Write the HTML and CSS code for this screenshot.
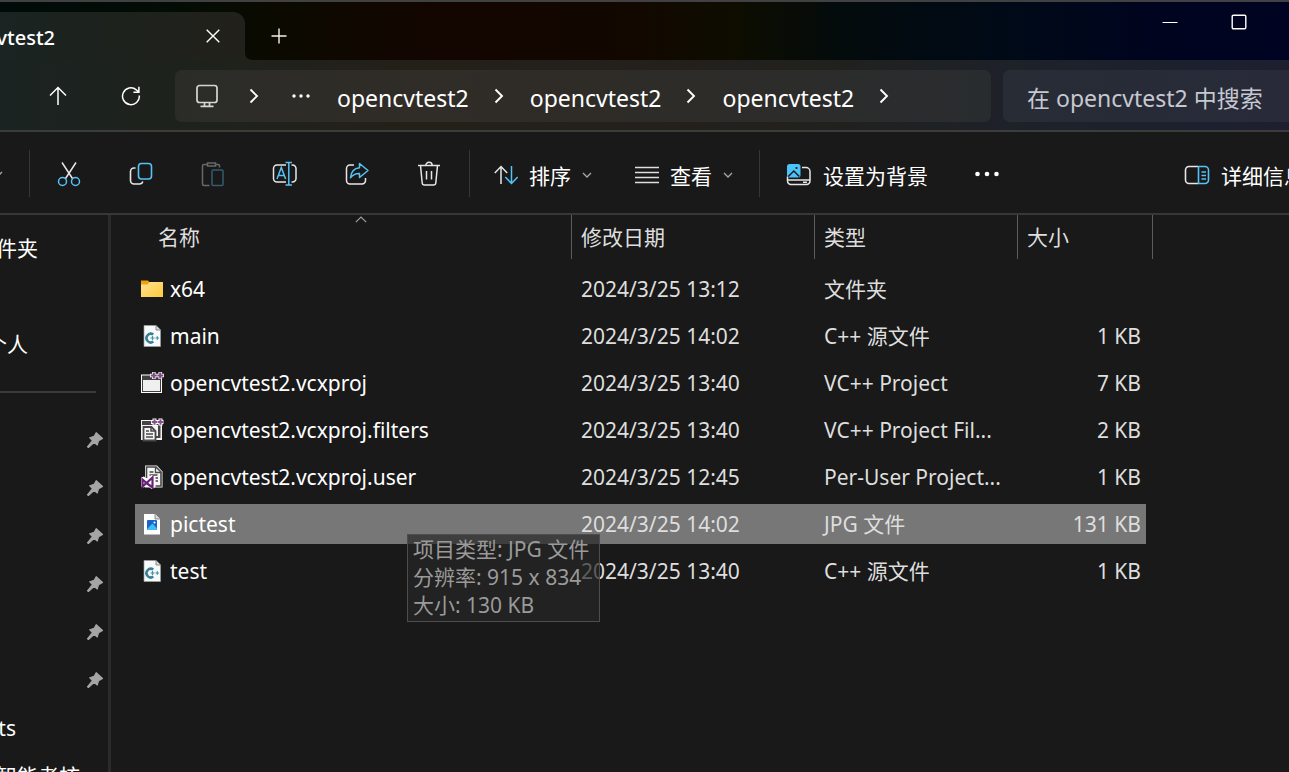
FILE: index.html
```html
<!DOCTYPE html>
<html lang="zh-CN">
<head>
<meta charset="utf-8">
<title>opencvtest2</title>
<link rel="stylesheet" href="styles.css">
</head>
<body>
<svg class="defs" aria-hidden="true">
  <symbol id="chev" viewBox="0 0 10 16"><path d="M1.5 1.5 8 8l-6.500 6.500" fill="none" stroke="currentColor" stroke-width="1.900"/></symbol>
  <symbol id="down" viewBox="0 0 10 6"><path d="M1 1l4 4 4-4" fill="none" stroke="#a8a8a8" stroke-width="1.300"/></symbol>
  <symbol id="pin" viewBox="0 0 16 16"><path d="M9.200.7 15.500 6.500 11.500 8.800 10.200 13 7.200 10.300 1.400 15.500.5 14.800 5.500 8.600 2.800 5.800 7.200 4.300z" fill="#a3a5a6" stroke="#a3a5a6" stroke-width="1.200" stroke-linejoin="round"/></symbol>
  <symbol id="cpp" viewBox="0 0 24 24"><path d="M4 1.500h12l4.500 4.500v16.500H4z" fill="#f7f9fa" stroke="#9aa0a3" stroke-width=".7"/><path d="M16 1.500V6h4.500" fill="#d5dadd" stroke="#777" stroke-width=".8"/><path d="M13.300 10.600a4.300 4.300 0 1 0 0 7" fill="none" stroke="#377f97" stroke-width="2.500"/><path d="M10.500 14h4m-2-2v4m3-2h3.500m-1.700-1.700v3.400" stroke="#4690a8" stroke-width="1.200"/></symbol>
</svg>
<div class="window">
  <header class="titlebar">
    <div class="tab">
      <span class="tab-name">vtest2</span>
      <button class="icon-btn tab-close" aria-label="关闭标签页"><svg width="14" height="14" viewBox="0 0 14 14"><path d="M.7.7l12.600 12.600M13.300.7.7 13.300" stroke="#fff" stroke-width="1.400"/></svg></button>
      <svg class="flare" width="8" height="8" viewBox="0 0 8 8"><path d="M0 0q0 8 8 8H0z" fill="#22211b"/></svg>
    </div>
    <button class="icon-btn new-tab" aria-label="新建标签页"><svg width="16" height="16" viewBox="0 0 16 16"><path d="M8 .5v15M.5 8h15" stroke="#f5f2e6" stroke-width="1.400"/></svg></button>
    <div class="caption">
      <button class="icon-btn caption-btn" aria-label="最小化"><svg width="16" height="16" viewBox="0 0 16 16"><path d="M.5 8.500h15" stroke="#fff"/></svg></button>
      <button class="icon-btn caption-btn" aria-label="最大化"><svg width="16" height="16" viewBox="0 0 16 16"><rect x="1.200" y="1.200" width="13.600" height="13.600" rx="1.200" fill="none" stroke="#fff" stroke-width="1.400"/></svg></button>
    </div>
  </header>

  <div class="navbar">
    <button class="icon-btn nav-btn" aria-label="向上"><svg width="20" height="20" viewBox="0 0 20 20"><path d="M10 19V1.500M2 9.500l8-8 8 8" fill="none" stroke="#fff" stroke-width="1.500"/></svg></button>
    <button class="icon-btn nav-btn" aria-label="刷新"><svg width="20" height="20" viewBox="0 0 20 20"><path d="M18.300 9.500a8.400 8.400 0 1 1-3-5.700l2 1.900M17.900.8v5.400h-5.500" fill="none" stroke="#fff" stroke-width="1.500"/></svg></button>
    <nav class="address" aria-label="地址栏">
      <svg width="24" height="24" viewBox="0 0 24 24"><path d="M4.500 1.500h15a2.500 2.500 0 0 1 2.500 2.500v12a2.500 2.500 0 0 1-2.500 2.500h-15A2.500 2.500 0 0 1 2 16V4a2.500 2.500 0 0 1 2.500-2.500zM9.500 18.500v3.500m5-3.500v3.500M5.500 22.300h13" fill="none" stroke="#d8d6d2" stroke-width="1.700"/></svg>
      <svg class="first-chev" width="10" height="16"><use href="#chev"/></svg>
      <button class="icon-btn crumb-more" aria-label="更多路径"><svg width="20" height="6" viewBox="0 0 20 6"><g fill="#fff"><circle cx="3" cy="3" r="1.700"/><circle cx="10" cy="3" r="1.700"/><circle cx="17" cy="3" r="1.700"/></g></svg></button>
      <a class="crumb" href="#">opencvtest2</a><svg class="chev" width="10" height="16"><use href="#chev"/></svg>
      <a class="crumb" href="#">opencvtest2</a><svg class="chev" width="10" height="16"><use href="#chev"/></svg>
      <a class="crumb" href="#">opencvtest2</a><svg class="chev" width="10" height="16"><use href="#chev"/></svg>
    </nav>
    <input class="search" type="text" aria-label="搜索" placeholder="在 opencvtest2 中搜索">
  </div>

  <div class="toolbar" role="toolbar">
    <button class="icon-btn new-menu" aria-label="新建"><svg width="10" height="6"><use href="#down"/></svg></button>
    <span class="divider"></span>
    <div class="tools">
      <button class="icon-btn" aria-label="剪切"><svg width="26" height="26" viewBox="0 0 26 26" fill="none" stroke-width="1.500"><path d="M6 1.500 16.800 18M20 1.500 9.200 18" stroke="#e6e6e6"/><circle cx="6.500" cy="20.500" r="4" stroke="#56c2f5"/><circle cx="19.500" cy="20.500" r="4" stroke="#56c2f5"/></svg></button>
      <button class="icon-btn" aria-label="复制"><svg width="26" height="26" viewBox="0 0 26 26" fill="none" stroke-width="1.600"><path d="M7.500 7H6a3.500 3.500 0 0 0-3.500 3.500v9A3.500 3.500 0 0 0 6 23h5.500a3.500 3.500 0 0 0 3.300-2.500" stroke="#e6e6e6"/><rect x="10.500" y="2.500" width="13" height="15.500" rx="3" stroke="#56c2f5"/></svg></button>
      <button class="icon-btn" aria-label="粘贴" disabled><svg width="26" height="26" viewBox="0 0 26 26" fill="none" stroke-width="1.500"><path d="M7.500 3.500H4A1.500 1.500 0 0 0 2.500 5v18A1.500 1.500 0 0 0 4 24.500h5.500M15.500 3.500H18A1.500 1.500 0 0 1 19.500 5v1.500M7.500 2h8v3h-8z" stroke="#686868"/><rect x="12" y="9" width="11" height="15.500" rx="1" stroke="#315d6d"/></svg></button>
      <button class="icon-btn" aria-label="重命名"><svg width="26" height="26" viewBox="0 0 26 26" fill="none" stroke-width="1.500"><path d="M14 4H5a3.500 3.500 0 0 0-3.500 3.500v10A3.500 3.500 0 0 0 5 21h9M19.500 4h1A3.500 3.500 0 0 1 24 7.500v10a3.500 3.500 0 0 1-3.500 3.500h-1" stroke="#e6e6e6"/><path d="M5 18l4.300-11.500L13.600 18M6.500 14.500h5.600M16.800 1.500v22.500M13.500 1.500h6.500M13.500 24h6.500" stroke="#56c2f5"/></svg></button>
      <button class="icon-btn" aria-label="共享"><svg width="26" height="26" viewBox="0 0 26 26" fill="none" stroke-width="1.500" stroke-linejoin="round"><path d="M10 4H6a3.500 3.500 0 0 0-3.500 3.500v12A3.500 3.500 0 0 0 6 23h12a3.500 3.500 0 0 0 3.500-3.500V17" stroke="#e6e6e6"/><path d="M15.500 2.500 24 9.500l-8.500 7v-4c-4-.2-6.500 1-9 4.200.5-5.700 3.500-9.500 9-10z" stroke="#56c2f5"/></svg></button>
      <button class="icon-btn" aria-label="删除"><svg width="26" height="26" viewBox="0 0 26 26" fill="none" stroke="#e6e6e6" stroke-width="1.500"><path d="M2 4.500h22M9.800 4.500a3.200 3.200 0 0 1 6.400 0M4.500 4.500l1.700 17.500a2.300 2.300 0 0 0 2.300 2h9a2.300 2.300 0 0 0 2.300-2l1.700-17.500M10.500 10v8.500m5-8.500v8.500"/></svg></button>
    </div>
    <span class="divider"></span>
    <button class="text-btn sort"><svg width="24" height="20" viewBox="0 0 24 20" fill="none" stroke-width="1.500"><path d="M7 19V2M.8 8 7 1.500 13.200 8" stroke="#e6e6e6"/><path d="M17.500 1v17M11.300 12l6.200 6.500 6.200-6.500" stroke="#56c2f5"/></svg><span class="label">排序</span><svg width="10" height="6"><use href="#down"/></svg></button>
    <button class="text-btn view"><svg width="24" height="20" viewBox="0 0 24 20"><path d="M0 2.500h24M0 7.500h24M0 12.500h24M0 17.500h24" stroke="#dedede" stroke-width="1.400"/></svg><span class="label">查看</span><svg width="10" height="6"><use href="#down"/></svg></button>
    <span class="divider"></span>
    <button class="text-btn wallpaper"><svg width="26" height="24" viewBox="0 0 26 24"><path d="M16 4.500h4a4 4 0 0 1 4 4V17M1.500 13.500V18a3.500 3.500 0 0 0 3.500 3.500h15.500A3.500 3.500 0 0 0 24 18v-1H1.500M17 19.300h4" fill="none" stroke="#e6e6e6" stroke-width="1.500"/><rect x="1" y="1" width="13.500" height="13.500" rx="2.500" fill="#4cc2f8"/><path d="M2.300 13.500 7.800 8l5.500 5.500" fill="none" stroke="#1a1a1a" stroke-width="1.500"/><circle cx="10.500" cy="5" r="1.100" fill="#1a1a1a"/></svg><span class="label">设置为背景</span></button>
    <button class="icon-btn more" aria-label="更多"><svg width="26" height="6" viewBox="0 0 26 6"><g fill="#fff"><circle cx="3.500" cy="3" r="2.300"/><circle cx="13" cy="3" r="2.300"/><circle cx="22.500" cy="3" r="2.300"/></g></svg></button>
    <button class="text-btn details"><svg width="26" height="20" viewBox="0 0 26 20" fill="none" stroke-width="1.600"><path d="M14 1.500H5A3.500 3.500 0 0 0 1.500 5v10A3.500 3.500 0 0 0 5 18.500h9" stroke="#e6e6e6"/><path d="M14.500 1.500H21A3.500 3.500 0 0 1 24.500 5v10a3.500 3.500 0 0 1-3.500 3.500h-6.500zM17.500 7h4.500M17.500 10.500h4.500M17.500 14h4.500" stroke="#56c2f5"/></svg><span class="label">详细信息</span></button>
  </div>

  <div class="body">
    <aside class="sidebar">
      <div class="side-row"><span class="side-name w-a">件夹</span></div>
      <div class="side-row"></div>
      <div class="side-row"><span class="side-name w-b">个人</span></div>
      <div class="side-row"><hr></div>
      <div class="side-row"><svg class="pin" width="16" height="16"><use href="#pin"/></svg></div>
      <div class="side-row"><svg class="pin" width="16" height="16"><use href="#pin"/></svg></div>
      <div class="side-row"><svg class="pin" width="16" height="16"><use href="#pin"/></svg></div>
      <div class="side-row"><svg class="pin" width="16" height="16"><use href="#pin"/></svg></div>
      <div class="side-row"><svg class="pin" width="16" height="16"><use href="#pin"/></svg></div>
      <div class="side-row"><svg class="pin" width="16" height="16"><use href="#pin"/></svg></div>
      <div class="side-row"><span class="side-name w-c">ts</span></div>
      <div class="side-row"><span class="side-name w-d">智能考核</span></div>
    </aside>
    <main class="content">
      <table class="files">
        <colgroup><col class="c-name"><col class="c-date"><col class="c-type"><col class="c-size"><col class="c-end"></colgroup>
        <thead>
          <tr>
            <th scope="col"><div class="head head-name">名称<svg class="sorted" width="12" height="7" viewBox="0 0 12 7"><path d="M.8 6.200 6 1l5.200 5.200" fill="none" stroke="#a0a0a0" stroke-width="1.200"/></svg></div></th>
            <th scope="col"><div class="head">修改日期</div></th>
            <th scope="col"><div class="head">类型</div></th>
            <th scope="col" colspan="2"><div class="head head-last">大小</div></th>
          </tr>
        </thead>
        <tbody>
          <tr><td><div class="file"><svg width="24" height="24" viewBox="0 0 24 24"><defs><linearGradient id="fold" x2="1" y2="1"><stop stop-color="#ffe394"/><stop offset="1" stop-color="#ffc83d"/></linearGradient></defs><path d="M1 3.500h7l2 2.500v4H1z" fill="#f0a30a"/><path d="M1 7.500h6.500L9.500 5H23v15H1z" fill="url(#fold)"/></svg>x64</div></td><td>2024/3/25 13:12</td><td>文件夹</td><td></td></tr>
          <tr><td><div class="file"><svg width="24" height="24"><use href="#cpp"/></svg>main</div></td><td>2024/3/25 14:02</td><td>C++ 源文件</td><td>1 KB</td></tr>
          <tr><td><div class="file"><svg width="24" height="24" viewBox="0 0 24 24"><path d="M1 3.500h21v18.500H1z" fill="#fff"/><path d="M2 4.500h19v16.500H2z" fill="#404040"/><path d="M3 9h17v11H3z" fill="#efefef"/><path d="M10 4.500h14M13.800 1v7M20.300 1v7" stroke="#fff" stroke-width="3.600"/><path d="M10.800 4.500h6m-3-3v6m3.500-3h6m-3-3v6" stroke="#814b83" stroke-width="2.200"/></svg>opencvtest2.vcxproj</div></td><td>2024/3/25 13:40</td><td>VC++ Project</td><td>7 KB</td></tr>
          <tr><td><div class="file"><svg width="24" height="24" viewBox="0 0 24 24"><path d="M1 2h21v20H1z" fill="#f5f5f5"/><path d="M2 3h18v4H2zM18 7h2.500v13H16v-2h2z" fill="#454545"/><path d="M3.500 9h8l4 4v9.500h-12z" fill="#f5f5f5" stroke="#484848" stroke-width="1.800"/><path d="M11 9v4h4M6 13h3M6 16h7M6 19h7" fill="none" stroke="#484848" stroke-width="1.500"/><path d="M11 4h12.500M14.500.5v7M20.500.5v7" stroke="#fff" stroke-width="4"/><path d="M11.800 4h5.400m-2.700-2.700v5.400M17.800 4h5.400m-2.700-2.700v5.400" stroke="#88518b" stroke-width="2"/></svg>opencvtest2.vcxproj.filters</div></td><td>2024/3/25 13:40</td><td>VC++ Project Fil...</td><td>2 KB</td></tr>
          <tr><td><div class="file"><svg width="24" height="24" viewBox="0 0 24 24"><path d="M5 .5h12l5.500 6V22.500H5z" fill="#f5f5f5"/><path d="M6.500 13V2h9.500l5 5v14h-7" fill="none" stroke="#484848" stroke-width="1.600"/><path d="M15.500 2v5.500H21M9.500 7h4M9.500 10h8M12 13h6M14.500 16H18" fill="none" stroke="#484848" stroke-width="1.300"/><path d="M1 12.500l3-1 3 2.500 4.500-4 4 2v10l-4 2-4.500-4-3 2.500-3-1z" fill="#fff"/><path d="M2.500 14.500l4 3.500 6-5.500v10l-6-4.500-4 3.500z" fill="none" stroke="#68217a" stroke-width="2.200"/></svg>opencvtest2.vcxproj.user</div></td><td>2024/3/25 12:45</td><td>Per-User Project...</td><td>1 KB</td></tr>
          <tr class="selected"><td><div class="file"><svg width="24" height="24" viewBox="0 0 24 24"><path d="M4 2h11l5 5v15.500H4z" fill="#fff"/><path d="M15 2v5h5" fill="#d8d8d8" stroke="#777" stroke-width=".8"/><rect x="7" y="8" width="10" height="10" rx="1" fill="#1767c4"/><path d="M7 17l5.500-5.500L17 16.500V17l-1 1H8z" fill="#43bdf5"/><circle cx="14.500" cy="10.500" r="1" fill="#fff"/></svg>pictest</div></td><td>2024/3/25 14:02</td><td>JPG 文件</td><td>131 KB</td></tr>
          <tr><td><div class="file"><svg width="24" height="24"><use href="#cpp"/></svg>test</div></td><td>2024/3/25 13:40</td><td>C++ 源文件</td><td>1 KB</td></tr>
        </tbody>
      </table>
      <div class="tooltip" role="tooltip">项目类型: JPG 文件<br>分辨率: 915 x 834<br>大小: 130 KB</div>
    </main>
  </div>
</div>
</body>
</html>
```

FILE: styles.css
```css
* { box-sizing: border-box; }

body {
  margin: 0;
  background: #191919;
  color: #fff;
  font: 21px/28px "Noto Sans", "Noto Sans CJK SC", sans-serif;
}

button, input { font: inherit; color: inherit; }
button { padding: 0; border: 0; background: none; white-space: nowrap; }
svg { display: block; flex: none; }
.defs { position: absolute; width: 0; height: 0; }

.window {
  display: flex;
  flex-direction: column;
  height: 100vh;
  overflow: hidden;
}

.icon-btn {
  display: flex;
  align-items: center;
  justify-content: center;
  flex: none;
}

/* Title bar */
.titlebar {
  display: flex;
  height: 60px;
  flex: none;
  border-top: 2px solid #414143;
  background: linear-gradient(90deg, #000b09 0%, #030c04 14%, #0c0a00 22%, #130500 34%, #120800 50%, #0d0d00 57%, #030b0d 66%, #000a17 78%, #00041f 90%, #000422 100%);
}

.tab {
  position: relative;
  display: flex;
  align-items: center;
  justify-content: space-between;
  width: 245px;
  margin-top: 10px;
  padding-right: 16px;
  border-radius: 0 12px 0 0;
  background: linear-gradient(90deg, #1a2422, #1d221d 45%, #22211b);
}

.tab-name {
  display: flex;
  justify-content: flex-end;
  width: 55px;
  padding-top: 4px;
  font-size: 20px;
  font-weight: 500;
}

.tab-close { width: 32px; height: 32px; }
.flare { position: absolute; left: 100%; bottom: 0; }
.new-tab { width: 68px; margin-top: 10px; }
.caption { display: flex; margin-left: auto; padding-right: 16px; }
.caption-btn { width: 69px; height: 40px; }

/* Navigation bar */
.navbar {
  display: flex;
  align-items: center;
  flex: none;
  height: 72px;
  padding: 10px 0 8px 21px;
  border-bottom: 2px solid #3c3c3a;
  background: linear-gradient(90deg, #1b2322 0%, #1e221c 14%, #23201a 30%, #24201b 50%, #20211f 66%, #1d222a 80%, #1d1f30 100%);
}

.nav-btn { width: 73px; height: 52px; }

.address {
  display: flex;
  align-items: center;
  flex: 1;
  min-width: 0;
  height: 52px;
  margin: 0 12px 0 8px;
  padding-left: 20px;
  border-radius: 7px;
  background: linear-gradient(90deg, #2b2c28, #302c27 30%, #2e2c28 60%, #292c2f);
}

.first-chev { margin-left: 30px; }
.crumb-more { width: 24px; margin: 0 24px 0 30px; }
.crumb { padding-top: 3px; color: #fff; font-size: 23px; text-decoration: none; }
.chev { margin: 0 26px 0 25px; }

.search {
  width: 286px;
  height: 52px;
  padding: 3px 0 0 24px;
  border: 0;
  border-radius: 7px 0 0 7px;
  background: linear-gradient(90deg, #272c35, #282a39);
  font-size: 23px;
}
.search::placeholder { color: #c6c8d0; opacity: 1; }

/* Command bar */
.toolbar {
  display: flex;
  align-items: center;
  flex: none;
  height: 83px;
  padding-top: 2px;
  overflow: hidden;
  border-bottom: 2px solid #373737;
}

.new-menu { width: 29px; justify-content: flex-start; margin-left: -7px; margin-right: 7px; }
.divider { flex: none; width: 1px; height: 47px; background: #363636; }
.tools { display: flex; margin: 0 4px 0 3px; }
.tools .icon-btn { width: 72px; height: 48px; }

.text-btn {
  display: flex;
  align-items: center;
  flex: none;
  gap: 11px;
  padding-top: 2px;
}
.label { padding-top: 3px; }
.sort { margin-left: 24px; }
.view { margin: 0 26px 0 43px; }
.wallpaper { margin-left: 26px; }
.more { width: 32px; margin-left: 43px; }
.details { margin: 0 -16px 0 auto; }

/* Body */
.body { display: flex; flex: 1; min-height: 0; }

.sidebar {
  flex: none;
  width: 111px;
  padding-top: 9px;
  overflow: hidden;
  border-right: 3px solid #2b2b2b;
}

.side-row { display: flex; align-items: center; height: 48px; }
.side-name { display: flex; justify-content: flex-end; white-space: nowrap; }
.w-a { width: 38px; }
.w-b { width: 28px; }
.w-c { width: 16px; }
.w-d { width: 80px; }
.side-row hr { width: 96px; height: 2px; margin: 0; border: 0; background: #3a3a3a; }
.pin { margin-left: 87px; }

.content { position: relative; flex: 1; min-width: 0; padding-left: 24px; }

.files { width: 1018px; table-layout: fixed; border-spacing: 0; }
.c-name { width: 436px; }
.c-date { width: 243px; }
.c-type { width: 203px; }
.c-size { width: 129px; }
.c-end { width: 7px; }

.files th { height: 51px; padding: 0; vertical-align: top; text-align: left; font-weight: 400; }
.head {
  display: flex;
  align-items: center;
  height: 44px;
  padding-left: 9px;
  border-left: 1px solid #5c5c5c;
  color: #dedede;
}
.head-name { position: relative; padding-left: 23px; border-left: 0; }
.head-last { border-right: 1px solid #5c5c5c; }
.sorted { position: absolute; top: 1px; left: 220px; }

.files td {
  height: 47px;
  padding: 0 0 0 10px;
  border: solid transparent;
  border-width: 3px 0 4px;
  background-clip: padding-box;
  color: #dedede;
  white-space: nowrap;
}
.files td:first-child { padding-left: 5px; color: #fff; }
.files td:nth-child(4) { padding: 0 5px 0 0; text-align: right; }
.files .selected td { background-color: #777; }
.file { display: flex; align-items: center; gap: 6px; }

.tooltip {
  position: absolute;
  top: 319px;
  left: 296px;
  padding: 0 10px 2px 5px;
  border: 1px solid #4d4d4d;
  background: rgba(38, 38, 38, .7);
  color: #9a9a9a;
  white-space: nowrap;
}
```
